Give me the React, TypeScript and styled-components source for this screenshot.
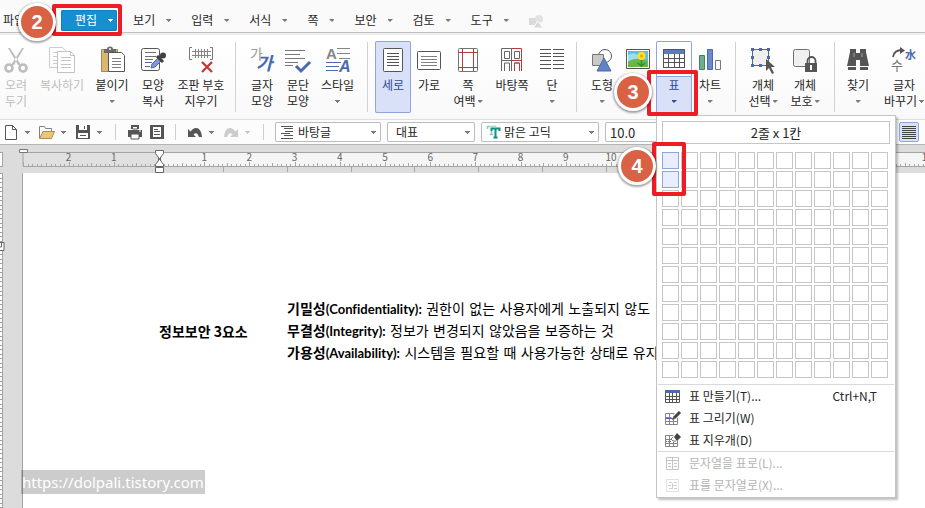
import React from 'react';
import styled, { createGlobalStyle, css } from 'styled-components';

const GlobalStyle = createGlobalStyle`
  * { box-sizing: border-box; }
  body { margin: 0; background: #ffffff; }
  body, button, select, input {
    font-family: "Noto Sans CJK KR", "Noto Sans", sans-serif;
    font-size: 12px;
  }
  button { border: 0; padding: 0; margin: 0; background: none; color: inherit; }
  svg { display: block; flex: none; overflow: visible; }
`;

const Window = styled.div`
  position: relative;
  display: flex;
  flex-direction: column;
  height: 100vh;
  overflow: hidden;
  color: #262626;
`;

/* ---------- shared parts ---------- */

const Caret = styled.span<{ $color?: string }>`
  flex: none;
  width: 5px;
  height: 4px;
  background: ${(p) => p.$color ?? '#7a7a7a'};
  clip-path: polygon(0 1px, 5px 1px, 5px 2px, 4px 2px, 4px 3px, 3px 3px, 3px 4px, 2px 4px, 2px 3px, 1px 3px, 1px 2px, 0 2px);
`;

const Anchor = styled.div`
  position: relative;
  display: flex;
  flex: none;
`;

const Frame = styled.div<{ $top: number; $left: number; $width: number; $height: number }>`
  position: absolute;
  z-index: 10;
  top: ${(p) => p.$top}px;
  left: ${(p) => p.$left}px;
  width: ${(p) => p.$width}px;
  height: ${(p) => p.$height}px;
  border: 4px solid #ee1c25;
  border-radius: 2px;
  pointer-events: none;
`;

const Badge = styled.div<{ $top: number; $left: number }>`
  position: absolute;
  z-index: 11;
  top: ${(p) => p.$top}px;
  left: ${(p) => p.$left}px;
  display: flex;
  align-items: center;
  justify-content: center;
  width: 38px;
  height: 38px;
  border: 3px solid #ffffff;
  border-radius: 50%;
  background: #d96245;
  box-shadow: 0 1px 2px 1px rgba(0, 0, 0, 0.35);
  color: #ffffff;
  font: 700 20px/24px "Liberation Sans", sans-serif;
`;

/* ---------- menu bar ---------- */

const MenuBar = styled.nav`
  display: flex;
  flex: none;
  align-items: center;
  height: 35px;
  padding: 10px 0 2px 3px;
  background: #fafafa;
  border-bottom: 2px solid #efefef;
  box-shadow: inset 0 -1px 0 #c0c0c0;
`;

const MenuButton = styled.button<{ $active?: boolean; $first?: boolean }>`
  display: flex;
  flex: none;
  align-items: center;
  gap: 11px;
  height: 21px;
  margin-right: 20px;
  padding-bottom: 1px;
  line-height: 20px;
  ${(p) => p.$first && css`
    width: 58px;
    margin-right: 0;
  `}
  ${(p) => p.$active && css`
    margin-right: 16px;
    padding: 0 4px 1px 14px;
    border-radius: 2px;
    background: #168fd0;
    box-shadow: inset 0 0 0 1px #0f7fbd;
    color: #ffffff;
  `}
`;

/* ---------- ribbon ---------- */

const Ribbon = styled.div`
  display: flex;
  flex: none;
  height: 85px;
  padding-top: 6px;
  background: linear-gradient(#ffffff, #f9f9f9);
  border-bottom: 1px solid #dedede;
`;

const RibbonRule = styled.div`
  flex: none;
  width: 1px;
  height: 70px;
  margin: 1px 7px 0;
  background: #d2d2d2;
`;

const Tool = styled.button<{ $width: number; $state?: 'on' | 'split' | 'off' }>`
  display: flex;
  flex: none;
  flex-direction: column;
  align-items: center;
  width: ${(p) => p.$width}px;
  height: 72px;
  padding-top: 6px;
  border-radius: 2px;
  line-height: 16px;
  white-space: nowrap;
  ${(p) => p.$state === 'off' && css`color: #bdbdbd;`}
  ${(p) => p.$state === 'on' && css`
    background: #d9e1f8;
    box-shadow: inset 0 0 0 1px #8fa5df;
    color: #2e4a94;
  `}
  ${(p) => p.$state === 'split' && css`
    background: linear-gradient(#ffffff 35px, #8fa5df 35px, #8fa5df 36px, #d9e1f8 36px);
    box-shadow: inset 0 0 0 1px #8fa5df;
    color: #2e4a94;
  `}
`;

const ToolIcon = styled.span`
  display: flex;
  height: 26px;
  margin-bottom: 4px;
`;

const ToolLine = styled.span`
  display: flex;
  align-items: center;
  gap: 2px;
  height: 16px;
`;

/* ---------- format bar ---------- */

const FormatBar = styled.div`
  display: flex;
  flex: none;
  align-items: center;
  height: 25px;
  padding-left: 1px;
  background: #fcfcfc;
  border-bottom: 1px solid #b4b4b4;
`;

const QuickButton = styled.button`
  display: flex;
  flex: none;
  align-items: center;
  justify-content: center;
  width: 20px;
  height: 20px;
`;

const CaretButton = styled(QuickButton)`
  width: 13px;
  margin-right: 3px;
`;

const IconPair = styled.div`
  display: flex;
  gap: 2px;
  padding-right: 2px;
`;

const QuickRule = styled.div`
  flex: none;
  width: 1px;
  height: 16px;
  margin: 0 9px 0 6px;
  background: #cfcfcf;
`;

const Fields = styled.div`
  display: flex;
  flex: none;
  gap: 6px;
  padding-left: 2px;
`;

const Field = styled.label<{ $width: number }>`
  display: flex;
  align-items: center;
  width: ${(p) => p.$width}px;
  height: 20px;
  padding: 0 4px;
  border: 1px solid #bcbcbc;
  border-radius: 2px;
  background: #ffffff;
`;

const FieldSelect = styled.select`
  flex: 1;
  min-width: 0;
  height: 18px;
  padding: 0 0 0 4px;
  border: 0;
  outline: 0;
  appearance: none;
  background: transparent;
  color: #262626;
  line-height: 18px;
`;

const FieldInput = styled.input`
  flex: 1;
  min-width: 0;
  height: 18px;
  padding: 0;
  border: 0;
  outline: 0;
  background: transparent;
  color: #262626;
  font-size: 13px;
`;

const AlignGroup = styled.div`
  display: flex;
  flex: none;
  gap: 4px;
  width: 26px;
  margin-left: auto;
  overflow: hidden;
`;

const AlignButton = styled(QuickButton)<{ $on?: boolean }>`
  ${(p) => p.$on && css`
    border: 1px solid #8fa5df;
    border-radius: 2px;
    background: #d9e1f8;
  `}
`;

/* ---------- document ---------- */

const RulerStrip = styled.div`
  flex: none;
  height: 28px;
  background: #dcdcdc;
`;

const Workspace = styled.div`
  display: flex;
  flex: 1;
  min-height: 0;
  background: #dcdcdc;
`;

const SideRuler = styled.div`
  flex: none;
  width: 22px;
  overflow: hidden;
`;

const Page = styled.main`
  display: flex;
  flex: 1;
  flex-direction: column;
  min-width: 0;
  padding: 125px 0 14px 136px;
  border-left: 1px solid #a4a4a4;
  background: #ffffff;
`;

const DocTable = styled.table`
  border-collapse: collapse;
  color: #000000;
  font-size: 14px;
  line-height: 22px;
  white-space: nowrap;
  th, td { padding: 0; text-align: left; vertical-align: middle; }
  th { width: 128px; font-weight: 700; }
  td { font-family: "DejaVu Sans", "Noto Sans CJK KR", sans-serif; }
  p { height: 22px; margin: 0; }
`;

const Latin = styled.span`
  font-family: Lato, "Noto Sans", sans-serif;
  font-size: 13px;
  font-variant-ligatures: none;
`;

const Watermark = styled.a`
  align-self: flex-start;
  margin: auto 0 0 -138px;
  padding: 0 1px;
  background: rgba(0, 0, 0, 0.2);
  color: #ffffff;
  font: 15px/24px "Noto Sans", sans-serif;
  text-decoration: none;
`;

/* ---------- table menu ---------- */

const TablePanel = styled.div`
  position: absolute;
  z-index: 5;
  top: 74px;
  left: 0;
  width: 240px;
  padding: 5px 0 1px;
  border: 1px solid #c4c4c4;
  background: #ffffff;
  box-shadow: 2px 2px 2px rgba(0, 0, 0, 0.25);
`;

const SizeTitle = styled.div`
  margin: 0 5px 8px;
  height: 23px;
  border: 1px solid #c6c6c6;
  font-size: 13px;
  line-height: 21px;
  text-align: center;
`;

const SizeGrid = styled.div`
  display: grid;
  grid-template-columns: repeat(12, 17px);
  grid-auto-rows: 17px;
  gap: 2px;
  padding: 0 5px 6px;
`;

const SizeCell = styled.button<{ $picked: boolean }>`
  border: 1px solid ${(p) => (p.$picked ? '#8fa5df' : '#c6c6c6')};
  background: ${(p) => (p.$picked ? '#e8eefb' : '#ffffff')};
`;

const MenuSection = styled.div`
  margin: 0 1px;
  border-top: 1px solid #dadada;
`;

const MenuItem = styled.button`
  display: flex;
  align-items: center;
  width: 100%;
  height: 22px;
  padding: 0 17px 0 7px;
  color: #262626;
  line-height: 20px;
  &:disabled { color: #b4b4b4; }
`;

const MenuText = styled.span`
  flex: 1;
  padding-left: 8px;
  text-align: left;
`;

/* ---------- icons ---------- */

const ink = '#555555';
const blue = '#4a69b0';

const Icon = ({ w = 26, h = 26, children }: { w?: number; h?: number; children: React.ReactNode }) => (
  <svg width={w} height={h} viewBox={`0 0 ${w} ${h}`} fill="none" aria-hidden="true">{children}</svg>
);

const CutIcon = () => (
  <Icon>
    <path d="M5 1 7 1 18 18 15 18zM21 1 19 1 8 18 11 18z" fill="#bdbdbd" />
    <circle cx="6" cy="21" r="3.5" stroke="#bdbdbd" strokeWidth="2.6" />
    <circle cx="20" cy="21" r="3.5" stroke="#bdbdbd" strokeWidth="2.6" />
  </Icon>
);
const CopyIcon = () => (
  <Icon>
    <path d="M.5 .5h13l3 3v17H.5zM4 5.500h5M4 9.500h4M4 13.500h4M4 16.500h4" stroke="#cccccc" />
    <path d="M8.500 4.500h13l4 4v17h-17z" fill="#fff" stroke="#c2c2c2" />
    <path d="M21.500 4.500v4h4M12 10.500h10M12 13.500h10M12 17.500h10M12 20.500h10" stroke="#c2c2c2" />
  </Icon>
);
const PasteIcon = () => (
  <Icon>
    <path d="M2.500 2.500h16v22h-16z" fill="#dbb671" stroke="#a88a52" />
    <path d="M5 2h3a3 2.500 0 0 1 6 0h3v4H5z" fill="#6b6b6b" />
    <circle cx="11" cy="2" r="1" fill="#fff" />
    <path d="M9.500 5.500h13l3 3v16h-16z" fill="#fff" stroke={ink} />
    <path d="M13 11.500h9M13 14.500h9M13 17.500h9M13 20.500h9" stroke="#808080" />
  </Icon>
);
const FormatCopyIcon = () => (
  <Icon>
    <rect x="1.500" y="1.500" width="18" height="22" rx="2" stroke={ink} />
    <path d="M5 5.500h11M5 9.500h11M5 12.500h8" stroke="#707070" />
    <path d="M5 15.500h7M5 19.500h5" stroke={blue} />
    <path d="m11 21 1-4 7-7 3 3-7 7z" fill="#7f9ad2" stroke={blue} />
    <path d="m17 9 6 6M20 11l3-3" stroke="#404040" strokeWidth="3" />
    <circle cx="23" cy="8.500" r="3" fill="#404040" />
  </Icon>
);
const ClearMarksIcon = () => (
  <Icon>
    <path d="M4 .5H1.500v12H4M22 .5h2.500v12H22" stroke="#777" />
    <path d="M4 4.500h19M4 8.500h19M7.500 2v9M10.500 2v9M13.500 2v9M16.500 2v9M19.500 2v9" stroke="#858585" />
    <path d="m14 15 10 10M24 15 14 25" stroke="#c23b3b" strokeWidth="2.400" />
  </Icon>
);
const CharShapeIcon = () => (
  <Icon>
    <text x="1" y="12" fontSize="14" fill="#9a9a9a">가</text>
    <text x="7" y="23" fontSize="18" fontWeight="700" fontStyle="italic" fill={blue}>가</text>
  </Icon>
);
const ParagraphIcon = () => (
  <Icon>
    <path d="M0 3.500h20M0 7.500h15M0 11.500h20M0 15.500h13M0 18.500h8" stroke="#777" />
    <path d="m11 19 5 5 9-9" stroke={blue} strokeWidth="3" />
  </Icon>
);
const StyleIcon = () => (
  <Icon>
    <text x="1" y="12" fontSize="15" fontWeight="700" fontFamily="Liberation Sans, sans-serif" fill="#858585">A</text>
    <path d="M12 1.500h13M12 6.500h13M14 11.500h11" stroke="#858585" />
    <path d="M1 15.500h15M1 19.500h13M1 23.500h12" stroke={blue} />
    <text x="14" y="25" fontSize="16" fontWeight="700" fontStyle="italic" fontFamily="Liberation Sans, sans-serif" fill={blue}>A</text>
  </Icon>
);
const PortraitIcon = () => (
  <Icon>
    <rect x="3.500" y="1.500" width="19" height="23" rx="1" fill="#fff" stroke={ink} />
    <path d="M7 6.500h12M7 9.500h12M7 12.500h12M7 15.500h12M7 18.500h12" stroke={ink} />
  </Icon>
);
const LandscapeIcon = () => (
  <Icon>
    <rect x="1.500" y="4.500" width="23" height="18" rx="1" fill="#fff" stroke={ink} />
    <path d="M5 9.500h16M5 12.500h16M5 15.500h16M5 18.500h16" stroke="#808080" />
  </Icon>
);
const MarginIcon = () => (
  <Icon>
    <rect x="3.500" y="1.500" width="19" height="23" rx="1" fill="#fff" stroke="#707570" />
    <path d="M7.500 2v22M18.500 2v22M4 5.500h18M4 20.500h18" stroke="#b83c3c" />
  </Icon>
);
const MasterPageIcon = () => (
  <Icon>
    <path d="M15.500 4.500h5v7h-5zM15.500 24v-8h5v8" stroke="#666" />
    <path d="M2.500 24V1.500h10V24M2.500 13.500h10M5.500 4.500h5v7h-5zM5.500 24v-8h5v8" stroke="#666" />
    <path d="M12.500 1.500h10V24M12.500 13.500h10M15.500 24v-8h5v8" stroke="#b83c3c" />
  </Icon>
);
const ColumnsIcon = () => (
  <Icon>
    <path d="M1 2.500h11M14 2.500h11M1 6.500h11M14 6.500h11M1 9.500h11M14 9.500h11M1 13.500h11M14 13.500h11M1 17.500h11M14 17.500h11M1 21.500h11M14 21.500h11" stroke={ink} />
  </Icon>
);
const ShapesIcon = () => (
  <Icon>
    <circle cx="16" cy="9" r="6.500" fill="#fff" stroke={ink} />
    <path d="M3.500 7.500h11v11h-11z" fill="#c9c9c9" stroke="#777" />
    <path d="m15 11 7 13H8z" fill="#6283c4" stroke={blue} />
  </Icon>
);
const PictureIcon = () => (
  <Icon>
    <path d="M1.500 2.500h23v19h-23z" fill="#fff" stroke={ink} />
    <path d="M3 4h20v16H3z" fill="#5ac0ea" />
    <path d="M3 8q6-4 11 1v5H3z" fill="#9edcf4" />
    <path d="M3 15q8-6 20-1v6H3z" fill="#68b846" />
    <circle cx="16.500" cy="9" r="4" fill="#ffdf25" />
    <circle cx="16.500" cy="9" r="1.500" fill="#f0a600" />
    <path d="M16.500 13v7m0-1-4-3m4 3 4-3" stroke="#2f8d36" strokeWidth="1.500" />
  </Icon>
);
const TableIcon = () => (
  <Icon>
    <path d="M2.500 2.500h21v18h-21z" fill="#fff" stroke={ink} />
    <path d="M2 2h22v5H2z" fill="#5b7cc0" />
    <path d="M2 11.500h22M2 15.500h22M7.500 7v14M13.500 7v14M18.500 7v14" stroke={ink} />
    <path d="M2.500 2.500h21v18h-21z" stroke={ink} />
  </Icon>
);
const ChartIcon = () => (
  <Icon>
    <path d="M2.500 8.500h5v14h-5z" fill="#6fae90" stroke="#45805f" />
    <path d="M10.500 2.500h5v20h-5z" fill="#6b8acb" stroke={blue} />
    <path d="M18.500 13.500h5v9h-5z" fill="#fff" stroke="#777" />
  </Icon>
);
const SelectObjectIcon = () => (
  <Icon>
    <path d="M2.500 2.500h16v16h-16z" fill="#efefef" stroke="#666" />
    <path d="M1 1h3v3H1zM9 1h3v3H9zM17 1h3v3h-3zM1 9h3v3H1zM1 17h3v3H1zM9 17h3v3H9zM17 9h3v3h-3z" fill={blue} />
    <path d="M16 12v12l3-3 3 6 2-1-3-6h4z" fill={ink} />
  </Icon>
);
const ProtectIcon = () => (
  <Icon>
    <rect x="1.500" y="2.500" width="16" height="17" rx="2" fill="#f0f0f0" stroke="#707070" />
    <path d="M15.500 17v-3a4 4 0 0 1 8 0v3" stroke={ink} strokeWidth="1.800" />
    <path d="M13 16h12v9H13z" fill={ink} />
    <path d="M18 18h2v5h-2z" fill="#fff" />
  </Icon>
);
const FindIcon = () => (
  <Icon>
    <path d="M5 2h6v4h4V2h6v3l3 14h-9v-6h-4v6H2L5 5z" fill={ink} />
    <path d="M3 20h8v3H3zM15 20h8v3h-8z" fill={ink} />
    <path d="M9 6v4M17 6v4" stroke="#a5a5a5" />
  </Icon>
);
const ReplaceIcon = () => (
  <Icon>
    <path d="M2 10q1-7 9-7" stroke={ink} strokeWidth="1.800" />
    <path d="m9 0 5 3.500-5 3.500z" fill={ink} />
    <text x="14" y="12" fontSize="11" fontWeight="700" fill={blue}>水</text>
    <text x="0" y="23" fontSize="13" fill="#777">수</text>
  </Icon>
);
const ObjectToolsIcon = () => (
  <Icon w={16} h={14}>
    <path d="M0 4h7v7H0z" fill="#dadada" />
    <circle cx="10" cy="5" r="4" fill="#e2e2e2" />
    <path d="m9 7 5 7H4z" fill="#dadada" stroke="#fafafa" />
  </Icon>
);

const NewIcon = () => (
  <Icon w={16} h={16}><path d="M2.500 1.500h7l4 4v10h-11z" fill="#fff" stroke={ink} /><path d="M9.500 1.500v4h4" stroke={ink} /></Icon>
);
const OpenIcon = () => (
  <Icon w={16} h={16}>
    <path d="M.5 14V2.500h5l1 2h6V7" stroke="#808080" />
    <path d="M.5 14.500 4 7.500h11.500l-3 7z" fill="#e7c778" stroke="#ad904f" />
  </Icon>
);
const SaveIcon = () => (
  <Icon w={16} h={16}><path d="M1 1h14v14H1z" fill={ink} /><path d="M4 1h8v5H4zM3 9h10v5H3z" fill="#fff" /><path d="M5 11.500h6M9.500 2v3" stroke={ink} /></Icon>
);
const PrintIcon = () => (
  <Icon w={16} h={16}><path d="M4 1h8v4H4zM1 6h14v7H1z" fill={ink} /><path d="M5.500 2.500h5V5h-5zM4 10h8v5H4z" fill="#fff" stroke={ink} /><path d="M12 7h2" stroke="#fff" /></Icon>
);
const PreviewIcon = () => (
  <Icon w={16} h={16}><path d="M1 1h14v14H1z" fill={ink} /><path d="M4 3h8v10H4z" fill="#fff" /><path d="M5 5.500h4M5 7.500h6M5 10.500h6" stroke={ink} /></Icon>
);
const UndoIcon = ({ color = ink, flip = false }) => (
  <Icon w={16} h={16}>
    <g transform={flip ? 'matrix(-1 0 0 1 16 0)' : undefined}>
      <path d="M1 5v8h8L6.500 10.500Q10 7 12 13h3Q14 3 8 4 5.500 4.500 3.500 7.500z" fill={color} />
    </g>
  </Icon>
);
const JustifyIcon = () => (
  <Icon w={14} h={14}>
    <path d="M0 1.500h14M0 3.500h14M0 5.500h14M0 7.500h14M0 9.500h14M0 11.500h14M0 13.500h14" stroke="#444" />
  </Icon>
);
const LeftIcon = () => (
  <Icon w={14} h={14}>
    <path d="M0 1.500h14M0 3.500h9M0 5.500h14M0 7.500h9M0 9.500h14M0 11.500h9M0 13.500h14" stroke="#444" />
  </Icon>
);
const IndentIcon = () => (
  <Icon w={14} h={14}>
    <path d="M1 1.500h12M4 3.500h9M5 6.500h8M1 8.500h9M4 10.500h9M1 13.500h12" stroke="#555" />
  </Icon>
);
const FontIcon = () => (
  <Icon w={14} h={14}>
    <path d="M1.500 4V1.500h8V4M5.500 1.500v8M3.500 9.500h4" stroke="#8fd0b8" strokeWidth="1.600" />
    <path d="M5.500 6V3.500h8V6M9.500 3.500v9M7.500 12.500h4" stroke="#fcfcfc" strokeWidth="3.500" />
    <path d="M5.500 6V3.500h8V6M9.500 3.500v9M7.500 12.500h4" stroke="#0d9180" strokeWidth="2" />
  </Icon>
);

const GridBase = ({ color = ink }) => (
  <path d="M.5 3.500h12v11H.5zM.5 7.500h12M.5 11.500h12M4.500 3.500v11M8.500 3.500v11" stroke={color} />
);
const MakeTableIcon = () => (
  <Icon w={16} h={16}><path d="M.5 2.500h14v12H.5zM0 8.500h15M0 11.500h15M4.500 5v9M7.500 5v9M11.500 5v9" stroke={ink} /><path d="M0 2h15v3H0z" fill={blue} /></Icon>
);
const DrawTableIcon = () => (
  <Icon w={16} h={16}><GridBase color="#858585" /><path d="M1 8.500h7" stroke={blue} /><path d="m8 9 7-8" stroke="#fff" strokeWidth="5" /><path d="m9 8 6-6" stroke="#444" strokeWidth="3" /><path d="m7 10 1-3 2 2z" fill="#444" /></Icon>
);
const EraseTableIcon = () => (
  <Icon w={16} h={16}><GridBase color="#858585" /><path d="M1 9.500h8" stroke="#c23b3b" strokeDasharray="1 1" /><path d="m6 6 5-5 5 4-5 5H7z" fill="#fff" /><path d="m9 5 3-4 4 4-4 4z" fill="#444" /><path d="m8 5-2 2 2 2h3" stroke="#777" /></Icon>
);
const TextToTableIcon = () => (
  <Icon w={16} h={16}><path d="M1.500 2.500h12v12h-12zM1.500 5.500h12M7.500 2.500v12M3 8.500h3M9 8.500h3M3 11.500h3M9 11.500h3" stroke="#c4c4c4" /></Icon>
);
const TableToTextIcon = () => (
  <Icon w={16} h={16}><path d="M1.500 2.500h12v12h-12z" stroke="#c4c4c4" strokeDasharray="1 1" /><path d="M4 5.500h3M9 5.500h3M3 8.500h3M8 8.500h4M4 11.500h3M9 11.500h3M7.500 6v6" stroke="#cfcfcf" /></Icon>
);

/* ---------- rulers ---------- */

const ORIGIN = 159;
const UNIT = 45.2;

const HorizontalRuler = () => {
  const ticks = Array.from({ length: 480 }, (_, i) => i - 30);
  return (
    <svg width="100%" height="28" fill="none" aria-label="가로 눈금자">
      <rect x="23" y="8" width={ORIGIN - 23} height="13" fill="#e0e0e0" />
      <rect x={ORIGIN} y="8" width="100%" height="13" fill="#f5f5f5" />
      <path d="M0 7.500h3M23 7.500h4000M23 21.500h4000M0 21.500h3" stroke="#a4a4a4" />
      <path d="M0 8h2v13H0z" fill="#fff" />
      <path d="M2.500 7v15M23 7v14" stroke="#a4a4a4" />
      <path
        stroke="#a8a8a8"
        d={ticks.map((t) => {
          const x = Math.round(ORIGIN + (t * UNIT) / 10) + 0.5;
          const top = t % 10 === 0 ? 17 : t % 5 === 0 ? 18 : 19;
          return `M${x} ${top}V21`;
        }).join('')}
      />
      <path
        stroke="#a8a8a8"
        d={Array.from({ length: 40 }, (_, i) => `M${Math.round(223 + i * 63.8) + 0.5} 22v5`).join('')}
      />
      {ticks.filter((t) => t % 10 === 0 && t !== 0 && t > -30).map((t) => (
        <text key={t} x={ORIGIN + (t * UNIT) / 10} y="16" fontSize="10" fill="#666" textAnchor="middle">{Math.abs(t / 10)}</text>
      ))}
      <path d="M19.500 4.500h8v3h-8z" fill="#fff" stroke="#777" />
      <path d="M155.500 5.500h8v3l-3 4v3l3 4v2h-8v-2l3-4v-3l-3-4zM155.500 22.500h8v5h-8z" fill="#fff" stroke="#666" />
      <path d="m158 12 3 4M161 12l-3 4" stroke="#666" />
    </svg>
  );
};

const VerticalRuler = () => (
  <svg width="22" height="2000" fill="none" aria-label="세로 눈금자">
    <path d="M0 0h2v2000H0z" fill="#fff" />
    <path
      stroke="#a0a0a0"
      d={Array.from({ length: 440 }, (_, i) => `M0 ${Math.round(i * 4.52) + 0.5}h2`).join('')}
    />
    <path d="M2.500 0v2000" stroke="#a4a4a4" />
    <path d="M-1 69.500h5v8h-5M1.500 70v4H0" fill="#fff" stroke="#666" />
  </svg>
);

/* ---------- data ---------- */

type ToolSpec = { w: number; icon: React.ReactNode; lines: string[]; caret?: boolean; state?: 'on' | 'split' | 'off'; panel?: boolean };

const groups: ToolSpec[][] = [
  [
    { w: 32, icon: <CutIcon />, lines: ['오려', '두기'], state: 'off' },
    { w: 60, icon: <CopyIcon />, lines: ['복사하기'], state: 'off' },
    { w: 40, icon: <PasteIcon />, lines: ['붙이기', ''], caret: true },
    { w: 42, icon: <FormatCopyIcon />, lines: ['모양', '복사'] },
    { w: 54, icon: <ClearMarksIcon />, lines: ['조판 부호', '지우기'] },
  ],
  [
    { w: 38, icon: <CharShapeIcon />, lines: ['글자', '모양'] },
    { w: 34, icon: <ParagraphIcon />, lines: ['문단', '모양'] },
    { w: 45, icon: <StyleIcon />, lines: ['스타일', ''], caret: true },
  ],
  [
    { w: 36, icon: <PortraitIcon />, lines: ['세로'], state: 'on' },
    { w: 36, icon: <LandscapeIcon />, lines: ['가로'] },
    { w: 42, icon: <MarginIcon />, lines: ['쪽', '여백'], caret: true },
    { w: 46, icon: <MasterPageIcon />, lines: ['바탕쪽'] },
    { w: 34, icon: <ColumnsIcon />, lines: ['단', ''], caret: true },
  ],
  [
    { w: 36, icon: <ShapesIcon />, lines: ['도형', ''], caret: true },
    { w: 36, icon: <PictureIcon />, lines: ['그림', ''], caret: true },
    { w: 36, icon: <TableIcon />, lines: ['표', ''], caret: true, state: 'split', panel: true },
    { w: 36, icon: <ChartIcon />, lines: ['차트', ''], caret: true },
  ],
  [
    { w: 40, icon: <SelectObjectIcon />, lines: ['개체', '선택'], caret: true },
    { w: 44, icon: <ProtectIcon />, lines: ['개체', '보호'], caret: true },
  ],
  [
    { w: 32, icon: <FindIcon />, lines: ['찾기', ''], caret: true },
    { w: 60, icon: <ReplaceIcon />, lines: ['글자', '바꾸기'], caret: true },
  ],
];

const TableMenu = () => (
  <TablePanel>
    <SizeTitle>2줄 x 1칸</SizeTitle>
    <SizeGrid>
      {Array.from({ length: 144 }, (_, i) => (
        <SizeCell key={i} $picked={i === 0 || i === 12} aria-label={`${Math.floor(i / 12) + 1}줄 ${(i % 12) + 1}칸`} />
      ))}
    </SizeGrid>
    <MenuSection>
      <MenuItem><MakeTableIcon /><MenuText>표 만들기(T)...</MenuText><span>Ctrl+N,T</span></MenuItem>
      <MenuItem><DrawTableIcon /><MenuText>표 그리기(W)</MenuText></MenuItem>
      <MenuItem><EraseTableIcon /><MenuText>표 지우개(D)</MenuText></MenuItem>
    </MenuSection>
    <MenuSection>
      <MenuItem disabled><TextToTableIcon /><MenuText>문자열을 표로(L)...</MenuText></MenuItem>
      <MenuItem disabled><TableToTextIcon /><MenuText>표를 문자열로(X)...</MenuText></MenuItem>
    </MenuSection>
    <Frame $top={26} $left={-5} $width={34} $height={54} />
    <Badge $top={31} $left={-39}>4</Badge>
  </TablePanel>
);

const RibbonTool = ({ tool }: { tool: ToolSpec }) => (
  <Anchor>
    <Tool $width={tool.w} $state={tool.state} disabled={tool.state === 'off'}>
      <ToolIcon>{tool.icon}</ToolIcon>
      {tool.lines.map((line, i) => (
        <ToolLine key={i}>
          {line}
          {tool.caret && i === tool.lines.length - 1 && <Caret $color={tool.state === 'split' ? '#2e4a94' : undefined} />}
        </ToolLine>
      ))}
    </Tool>
    {tool.panel && (
      <>
        <TableMenu />
        <Frame $top={29} $left={-9} $width={51} $height={46} />
        <Badge $top={32} $left={-42}>3</Badge>
      </>
    )}
  </Anchor>
);

const QuickPair = ({ label, color, children }: { label: string; color?: string; children: React.ReactNode }) => (
  <>
    <QuickButton aria-label={label}>{children}</QuickButton>
    <CaretButton aria-label={`${label} 목록`}><Caret $color={color} /></CaretButton>
  </>
);

export default function App() {
  return (
    <Window>
      <GlobalStyle />
      <MenuBar>
        <MenuButton $first>파일</MenuButton>
        <Anchor>
          <MenuButton $active>편집<Caret $color="#ffffff" /></MenuButton>
          <Frame $top={-6} $left={-9} $width={70} $height={32} />
          <Badge $top={-7} $left={-43}>2</Badge>
        </Anchor>
        {['보기', '입력', '서식', '쪽', '보안', '검토', '도구'].map((name) => (
          <MenuButton key={name}>{name}<Caret /></MenuButton>
        ))}
        <ObjectToolsIcon />
      </MenuBar>

      <Ribbon>
        {groups.map((group, g) => (
          <React.Fragment key={g}>
            {g > 0 && <RibbonRule />}
            {group.map((tool) => <RibbonTool key={tool.lines.join('')} tool={tool} />)}
          </React.Fragment>
        ))}
      </Ribbon>

      <FormatBar>
        <QuickPair label="새 문서"><NewIcon /></QuickPair>
        <QuickPair label="불러오기"><OpenIcon /></QuickPair>
        <QuickPair label="저장하기"><SaveIcon /></QuickPair>
        <QuickRule />
        <IconPair>
          <QuickButton aria-label="인쇄"><PrintIcon /></QuickButton>
          <QuickButton aria-label="미리 보기"><PreviewIcon /></QuickButton>
        </IconPair>
        <QuickRule />
        <QuickPair label="되돌리기"><UndoIcon /></QuickPair>
        <QuickPair label="다시 실행" color="#c8c8c8"><UndoIcon color="#cccccc" flip /></QuickPair>
        <QuickRule />
        <Fields>
          <Field $width={106}>
            <IndentIcon />
            <FieldSelect aria-label="스타일"><option>바탕글</option></FieldSelect>
            <Caret />
          </Field>
          <Field $width={88}>
            <FieldSelect aria-label="글꼴 언어"><option>대표</option></FieldSelect>
            <Caret />
          </Field>
          <Field $width={118}>
            <FontIcon />
            <FieldSelect aria-label="글꼴"><option>맑은 고딕</option></FieldSelect>
            <Caret />
          </Field>
          <Field $width={60}>
            <FieldInput aria-label="글자 크기" defaultValue="10.0" />
          </Field>
        </Fields>
        <AlignGroup>
          <AlignButton $on aria-label="양쪽 정렬"><JustifyIcon /></AlignButton>
          <AlignButton aria-label="왼쪽 정렬"><LeftIcon /></AlignButton>
        </AlignGroup>
      </FormatBar>

      <RulerStrip><HorizontalRuler /></RulerStrip>

      <Workspace>
        <SideRuler><VerticalRuler /></SideRuler>
        <Page>
          <DocTable>
            <tbody>
              <tr>
                <th scope="row">정보보안 3요소</th>
                <td>
                  <p><b>기밀성<Latin>(Confidentiality):</Latin></b> 권한이 없는 사용자에게 노출되지 않도</p>
                  <p><b>무결성<Latin>(Integrity):</Latin></b> 정보가 변경되지 않았음을 보증하는 것</p>
                  <p><b>가용성<Latin>(Availability):</Latin></b> 시스템을 필요할 때 사용가능한 상태로 유지</p>
                </td>
              </tr>
            </tbody>
          </DocTable>
          <Watermark href="https://dolpali.tistory.com">https://dolpali.tistory.com</Watermark>
        </Page>
      </Workspace>
    </Window>
  );
}
